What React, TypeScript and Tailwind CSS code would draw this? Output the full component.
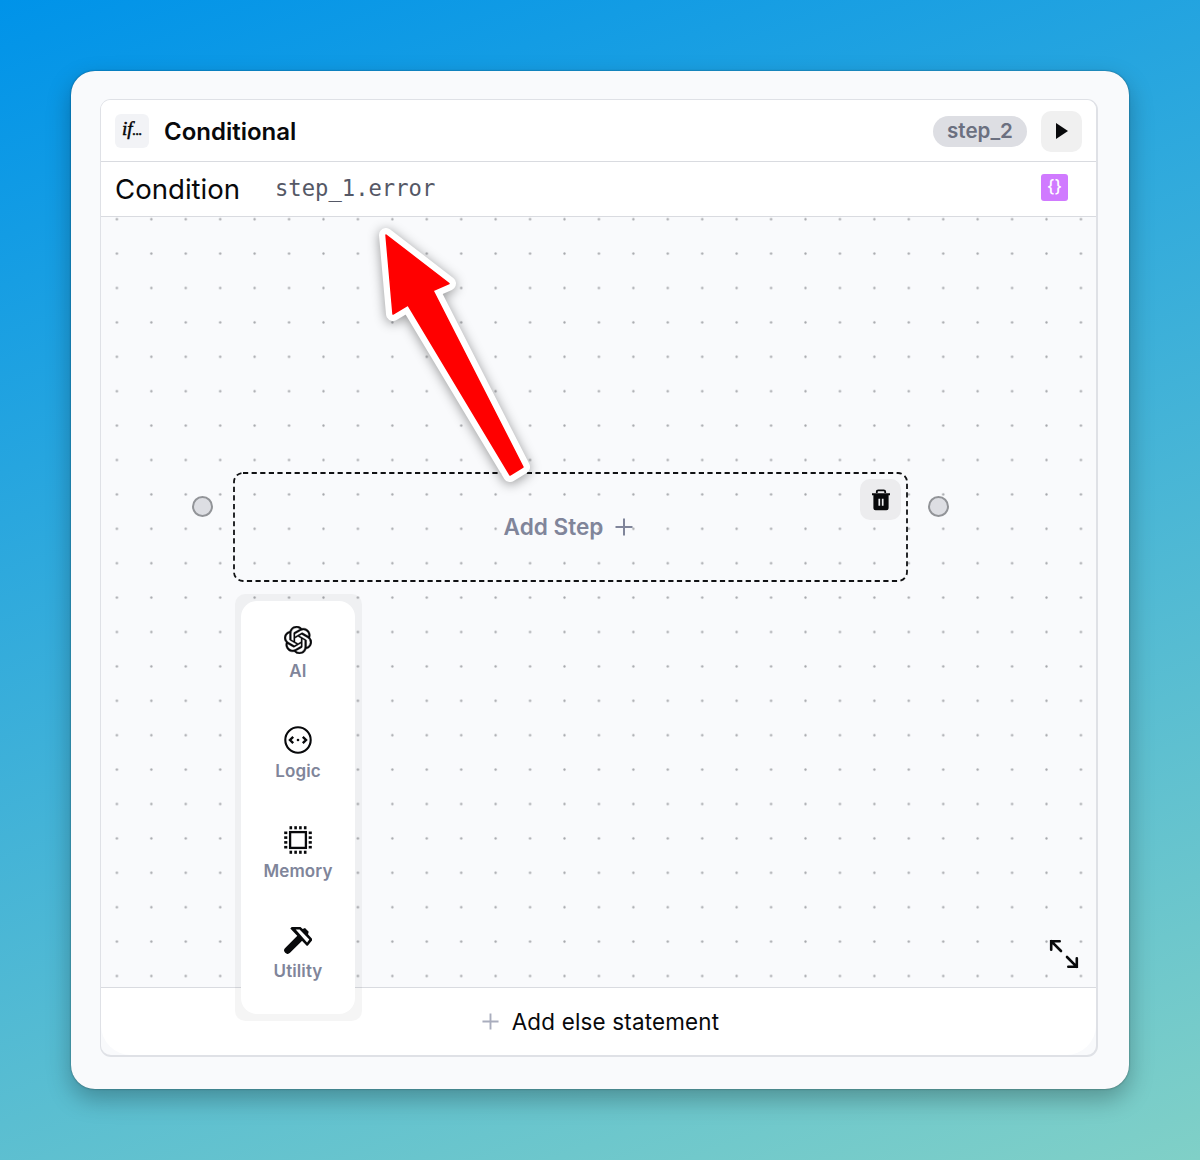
import { SiOpenai } from "react-icons/si";
import type { ReactNode } from "react";

function Tool({ label, children }: { label: string; children: ReactNode }) {
  return (
    <button className="flex h-[100px] w-full flex-col items-center gap-[5px] pt-[25px] text-[17px] leading-[24px] font-semibold tracking-[0.1px] text-[#80859a]">
      <span className="flex h-7 w-7 items-center justify-center text-[#08090b]">{children}</span>
      {label}
    </button>
  );
}

function Chip() {
  const pins = [5.5, 10.3, 15.1, 19.9];
  return (
    <svg viewBox="0 0 28 28" className="h-7 w-7" fill="currentColor">
      <rect x="6.1" y="6.1" width="15.8" height="15.8" fill="none" stroke="currentColor" strokeWidth="2.3" />
      {pins.map((p) => (
        <g key={p}>
          <rect x={p} y="0.2" width="2.6" height="3.1" />
          <rect x={p} y="24.7" width="2.6" height="3.1" />
          <rect x="0.2" y={p} width="3.1" height="2.6" />
          <rect x="24.7" y={p} width="3.1" height="2.6" />
        </g>
      ))}
    </svg>
  );
}

function Plus({ className }: { className: string }) {
  return (
    <svg viewBox="0 0 18 18" className={className} fill="none" stroke="currentColor" strokeWidth="2">
      <path d="M9 0.5v17M0.5 9h17" />
    </svg>
  );
}

export default function App() {
  return (
    <main className="h-[1160px] w-[1200px] bg-[linear-gradient(160deg,#0093E9_0%,#80D0C7_100%)] p-[71px] font-['Inter',sans-serif]">
      <div className="h-[1018px] w-[1058px] rounded-[24px] bg-[#f9fafc] pt-[28px] pl-[29px] shadow-[0_0_2px_rgba(0,0,0,0.45),0_10px_24px_rgba(0,0,0,0.28)]">
        <section className="relative flex h-[958px] w-[998px] flex-col rounded-[11px] border-t border-r-2 border-b-2 border-l border-[#dfe1e6] bg-[#f9fafc]">
          <header className="flex h-[62px] items-center rounded-t-[9px] border-b border-[#d9dbe0] bg-white pt-px pr-[14px] pl-[14px]">
            <div className="flex h-[34px] w-[34px] items-center justify-center rounded-md bg-[#f2f3f6]">
              <span className="-mt-[3px] font-['Liberation_Serif',serif] text-[19px] tracking-[0px] italic [-webkit-text-stroke:0.5px_#08090b]">if<span className="text-[14px] tracking-[-0.3px]">...</span></span>
            </div>
            <h1 className="mt-px ml-[15px] text-[24px] font-semibold text-[#08090b]">Conditional</h1>
            <span className="mr-[14px] ml-auto flex h-[31px] w-[94px] items-center justify-center rounded-full bg-[#dddee3] pt-px text-[20.6px] font-semibold text-[#6b7080]">step_2</span>
            <button className="flex h-[41px] w-[41px] items-center justify-center rounded-[10px] bg-[#f0f0f0]">
              <svg viewBox="0 0 12 16" className="h-4 w-3" fill="#08090b"><path d="M0 0l12 8-12 8z" /></svg>
            </button>
          </header>
          <div className="flex h-[55px] items-center border-b border-[#d9dbe0] bg-white pr-[28px] pl-[14px]">
            <label className="mt-px w-[160px] text-[27.6px] text-[#08090b]">Condition</label>
            <code className="font-['DejaVu_Sans_Mono',monospace] text-[22.2px] text-[#555866]">step_1.error</code>
            <span className="-mt-1 ml-auto flex h-[27px] w-[27px] items-center justify-center rounded-[3px] bg-[#d07aff] pb-px text-[17px] leading-none font-medium text-white">{"{}"}</span>
          </div>
          <div className="relative flex-1 overflow-hidden border-b border-[#d9dbe0]">
            <svg className="absolute inset-0 h-full w-full">
              <defs>
                <pattern id="dots" x="-1.3" y="-15" width="34.43" height="34.4" patternUnits="userSpaceOnUse">
                  <circle cx="17.2" cy="17.2" r="1.15" fill="#a4a6aa" />
                </pattern>
              </defs>
              <rect width="100%" height="100%" fill="url(#dots)" />
            </svg>
            <div className="absolute top-[279px] left-[91px] h-[21px] w-[21px] rounded-full border-2 border-[#929498] bg-[#dddee3]" />
            <div className="absolute top-[279px] left-[827px] h-[21px] w-[21px] rounded-full border-2 border-[#929498] bg-[#dddee3]" />
            <div className="absolute top-[255px] left-[132px] flex h-[110px] w-[675px] items-center justify-center">
              <svg className="absolute inset-0 h-full w-full" fill="none">
                <rect x="1" y="1" width="673" height="108" rx="9" stroke="#111214" strokeWidth="1.8" strokeDasharray="5.2 3.4" />
              </svg>
              <span className="flex items-center gap-[12px] pr-[4px] text-[22.6px] font-semibold text-[#80859a]">
                Add Step
                <Plus className="h-[18px] w-[18px]" />
              </span>
              <button className="absolute top-[7px] right-[7px] flex h-[41px] w-[41px] items-center justify-center rounded-[10px] bg-[#ececee]">
                <svg viewBox="0 0 20 22" className="h-[22px] w-5" fill="none">
                  <path d="M5.8 4V2.8Q5.8 1.3 7.3 1.3h5.4q1.5 0 1.500 1.500V4" stroke="#08090b" strokeWidth="1.8" />
                  <path d="M1 4.200h18v2H1zM2.400 5h15.200v14q0 2.200-2.200 2.200H4.600q-2.200 0-2.200-2.200z" fill="#08090b" />
                  <path d="M8.300 9.800v7M11.700 9.800v7" stroke="#ececee" strokeWidth="1.700" />
                </svg>
              </button>
            </div>
            <svg viewBox="0 0 30 30" className="absolute right-[17px] bottom-[18px] h-[30px] w-[30px]" fill="none" stroke="#08090b" strokeWidth="2.6" strokeLinecap="round">
              <path d="M10.700 2.200H2.200v8.500M2.200 2.200l9.800 9.800M19.300 27.800h8.500v-8.500M27.800 27.800l-9.800-9.800" />
            </svg>
          </div>
          <button className="flex h-[67px] w-full items-center justify-center gap-[13px] rounded-b-[30px] bg-white pl-[4px] text-[22.4px] tracking-[0.2px] text-[#08090b]">
            <Plus className="h-[17px] w-[17px] text-[#a9adbd]" />
            Add else statement
          </button>
          <nav className="absolute top-[494px] left-[134px] h-[427px] w-[127px] rounded-[10px] bg-black/[0.04] pt-[7px] pl-[6px]">
            <div className="h-[413px] w-[114px] rounded-[16px] bg-white">
              <Tool label="AI"><SiOpenai className="h-7 w-7 stroke-current [stroke-width:0.3]" /></Tool>
              <Tool label="Logic">
                <svg viewBox="0 0 28 28" className="h-7 w-7" fill="none" stroke="currentColor" strokeWidth="2.1">
                  <circle cx="14" cy="14" r="12.7" />
                  <path d="M9.2 10.900L6 14l3.200 3.100M18.800 10.900l3.200 3.100-3.200 3.100" strokeWidth="2.400" />
                  <circle cx="14" cy="14" r="1.3" fill="currentColor" stroke="none" />
                </svg>
              </Tool>
              <Tool label="Memory"><Chip /></Tool>
              <Tool label="Utility">
                <svg viewBox="0 0 28 28" className="h-7 w-7" fill="currentColor">
                  <path d="M3.600 24.400L15.500 12.500" stroke="currentColor" strokeWidth="6.800" strokeLinecap="round" />
                  <path d="M6.300 2.600L7.700 1h8.800l2.200 1.900 2.300-.9 3.700 3.800-.7 2.500 4 4.400v1.700l-4.300 5.300h-1z" />
                  <path d="M11.700 3.400h3.900l9.700 10-2.200 3z" fill="#fff" />
                </svg>
              </Tool>
            </div>
          </nav>
          <svg viewBox="360 210 200 290" className="pointer-events-none absolute top-[110px] left-[258px] h-[290px] w-[200px] overflow-visible drop-shadow-[0_2px_6px_rgba(0,0,0,0.4)]">
            <path d="M387 235L450 283.500L434 290.500L524 467L511 475L409 305L394 314Z" fill="#fff" stroke="#fff" strokeWidth="14" strokeLinejoin="round" />
            <path d="M387 235L450 283.500L434 290.500L524 467L511 475L409 305L394 314Z" fill="#f00" stroke="#f00" strokeWidth="1.500" strokeLinejoin="round" />
          </svg>
        </section>
      </div>
    </main>
  );
}
